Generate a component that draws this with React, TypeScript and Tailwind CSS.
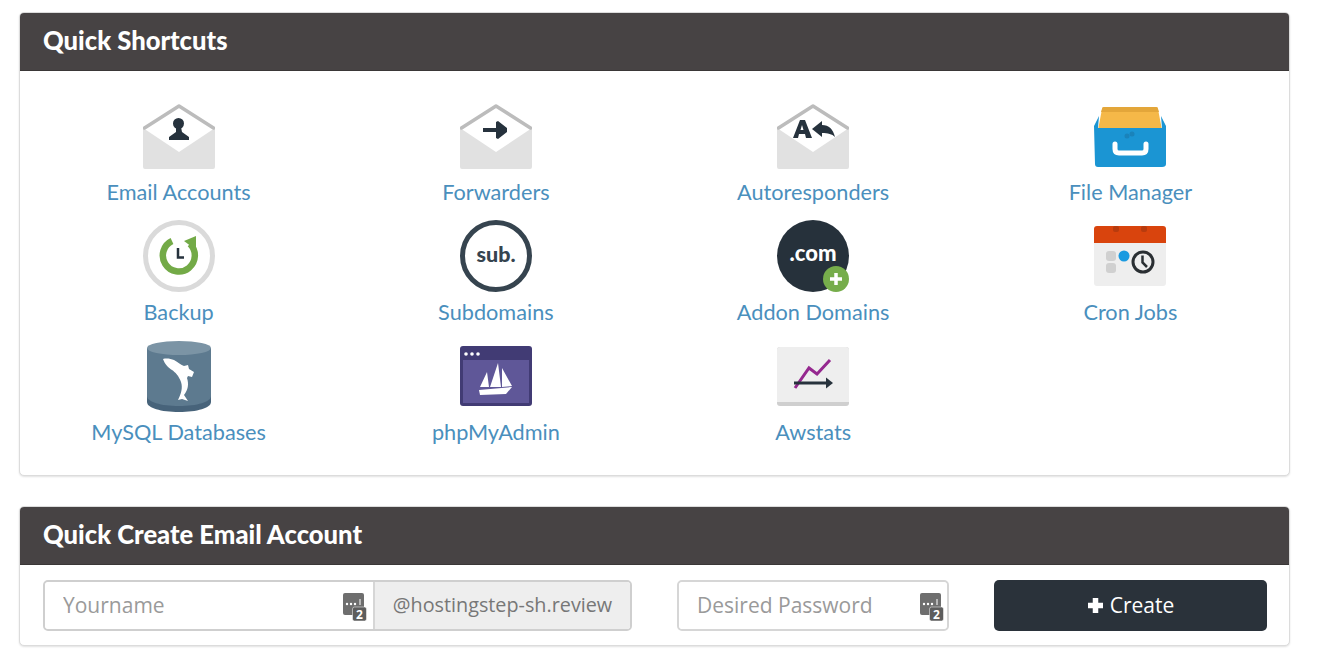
const LABEL_FONT = "font-['Lato',sans-serif]";

function Envelope({ children }: { children: React.ReactNode }) {
  return (
    <svg width="72" height="72" viewBox="0 0 72 72">
      <path d="M36 6 L70 28 L36 52 L2 28 Z" fill="#fff" />
      <path d="M0 28 L36 52 L72 28 L72 67 Q72 69 70 69 L2 69 Q0 69 0 67 Z" fill="#e1e1e1" />
      <path d="M1.5 28 L36 6 L70.5 28" fill="none" stroke="#bcbcbc" strokeWidth="3.5" strokeLinejoin="round" strokeLinecap="round" />
      {children}
    </svg>
  );
}

const EmailIcon = () => (
  <Envelope>
    <circle cx="35.5" cy="23.5" r="5.5" fill="#26323d" />
    <path d="M33 27 h5 l1 5 l7 5 v3 h-20 v-3 l7 -5 Z" fill="#26323d" />
  </Envelope>
);

const ForwarderIcon = () => (
  <Envelope>
    <path d="M23 28 h13 v-6 l2 -1 l9 7 v4 l-9 7 l-2 -1 v-6 h-13 Z" fill="#26323d" />
  </Envelope>
);

const AutoresponderIcon = () => (
  <Envelope>
    <path d="M16 38 L23 20 h5 l7 18 h-6 l-1 -4 h-6 l-1 4 Z M23.5 30 h3 l-1.5 -5 Z" fill="#26323d" fillRule="evenodd" />
    <path d="M35 29 L45 21 v4 c7 0 11 4 13 12 c-3 -3 -7 -4 -13 -4 v4 Z" fill="#26323d" />
  </Envelope>
);

const FileManagerIcon = () => (
  <svg width="72" height="72" viewBox="0 0 72 72">
    <path d="M8 9 Q8 7 10 7 L62 7 Q64 7 64 9 L68 30 L4 30 Z" fill="#f5b848" />
    <path d="M8 9 Q8 7 10 7 L62 7 Q64 7 64 9 L65 12 L7 12 Z" fill="#e3a63a" />
    <path d="M0 26 L5 16 L4 28 L68 28 L67 16 L72 26 L72 64 Q72 67 68 67 L4 67 Q1 67 1 64 Z" fill="#1b95d3" />
    <path d="M21 44 V49 Q21 53 25 53 H48 Q52 53 52 49 V44" fill="none" stroke="#fff" strokeWidth="5" strokeLinecap="round" />
    <circle cx="33" cy="36" r="2.5" fill="#1a83ba" />
    <circle cx="38" cy="34" r="2.5" fill="#1a83ba" />
  </svg>
);

const BackupIcon = () => (
  <svg width="72" height="72" viewBox="0 0 72 72">
    <circle cx="36" cy="36" r="33.5" fill="none" stroke="#dadada" strokeWidth="5" />
    <path d="M47 24 A 16 16 0 1 1 29 21" fill="none" stroke="#73aa47" strokeWidth="6.5" />
    <path d="M41 21 L53 16 L53 30 Z" fill="#73aa47" />
    <path d="M35 28 V37.5 H41" fill="none" stroke="#26323d" strokeWidth="2.5" />
  </svg>
);

const SubdomainIcon = () => (
  <svg width="72" height="72" viewBox="0 0 72 72">
    <circle cx="36" cy="36" r="33.5" fill="#fff" stroke="#36444f" strokeWidth="5" />
    <text x="36" y="42" textAnchor="middle" fontFamily="Lato, sans-serif" fontWeight="900" fontSize="21.5" fill="#36444f">sub.</text>
  </svg>
);

const AddonIcon = () => (
  <svg width="72" height="72" viewBox="0 0 72 72">
    <circle cx="36" cy="36" r="36" fill="#26313b" />
    <text x="36" y="41" textAnchor="middle" fontFamily="Lato, sans-serif" fontWeight="900" fontSize="22" fill="#fff">.com</text>
    <circle cx="59" cy="59" r="13" fill="#76ad4b" />
    <path d="M59 53 V65 M53 59 H65" stroke="#fff" strokeWidth="3.5" />
  </svg>
);

const CronIcon = () => (
  <svg width="72" height="72" viewBox="0 0 72 72">
    <path d="M0 23 H72 V63 Q72 66 69 66 H3 Q0 66 0 63 Z" fill="#eeeeee" />
    <path d="M0 23 V9 Q0 6 3 6 H69 Q72 6 72 9 V23 Z" fill="#d9440d" />
    <rect x="19" y="6" width="6" height="6" rx="2" fill="#b83b0e" />
    <rect x="47" y="6" width="6" height="6" rx="2" fill="#b83b0e" />
    <rect x="12" y="31" width="10" height="10" rx="3" fill="#d0d0d0" />
    <rect x="12" y="43" width="10" height="10" rx="3" fill="#d0d0d0" />
    <circle cx="30" cy="36" r="5.5" fill="#1a9ae0" />
    <circle cx="49" cy="42" r="10" fill="#eee" stroke="#2a2f33" strokeWidth="3" />
    <path d="M48.5 35.5 V42.5 L53 47" fill="none" stroke="#2a2f33" strokeWidth="2.5" />
  </svg>
);

const MysqlIcon = () => (
  <svg width="72" height="72" viewBox="0 0 72 72">
    <path d="M4 8 V62 C4 68 18 72 36 72 C54 72 68 68 68 62 V8 Z" fill="#47637a" />
    <path d="M4 8 V56 C4 62 18 66 36 66 C54 66 68 62 68 56 V8 Z" fill="#5d7a8f" />
    <ellipse cx="36" cy="8" rx="32" ry="7" fill="#7b94a5" />
    <path d="M20 19 C24 18 28 19 31 20 C35 22 38 25 41 26 L45 25 L46 29 L51 32 L49 37 L45 36 L44 38 C46 44 45 50 41 55 L45 61 L39 59 L35 60 C38 54 40 48 38 42 C36 36 32 32 29 30 C26 28 22 25 20 19 Z" fill="#fff" />
  </svg>
);

const PhpMyAdminIcon = () => (
  <svg width="72" height="72" viewBox="0 0 72 72">
    <rect x="0" y="6" width="72" height="60" rx="3" fill="#413b74" />
    <rect x="3" y="20" width="66" height="43" fill="#5f5798" />
    <circle cx="6" cy="14" r="1.8" fill="#fff" />
    <circle cx="12" cy="14" r="1.8" fill="#fff" />
    <circle cx="18" cy="14" r="1.8" fill="#fff" />
    <path d="M20 47 L27 32 L29 47 Z M30 47 L38 23 L41 47 Z M42 47 L42 28 L52 46 Z" fill="#fff" />
    <path d="M19 50 L52 47 L46 54 L20 55 Z" fill="#fff" />
  </svg>
);

const AwstatsIcon = () => (
  <svg width="72" height="72" viewBox="0 0 72 72">
    <path d="M0 10 Q0 7 3 7 H69 Q72 7 72 10 V63 Q72 66 69 66 H3 Q0 66 0 63 Z" fill="#cfcfcf" />
    <path d="M0 10 Q0 7 3 7 H69 Q72 7 72 10 V62 H0 Z" fill="#eeeeee" />
    <path d="M18 48 L32 28 L40 34 L53 20" fill="none" stroke="#95288f" strokeWidth="3" />
    <path d="M17 43 H50" stroke="#27323c" strokeWidth="3" />
    <path d="M49 37.5 L56 43 L49 48.5 Z" fill="#27323c" />
  </svg>
);

const SHORTCUTS = [
  { label: "Email Accounts", icon: EmailIcon },
  { label: "Forwarders", icon: ForwarderIcon },
  { label: "Autoresponders", icon: AutoresponderIcon },
  { label: "File Manager", icon: FileManagerIcon },
  { label: "Backup", icon: BackupIcon },
  { label: "Subdomains", icon: SubdomainIcon },
  { label: "Addon Domains", icon: AddonIcon },
  { label: "Cron Jobs", icon: CronIcon },
  { label: "MySQL Databases", icon: MysqlIcon },
  { label: "phpMyAdmin", icon: PhpMyAdminIcon },
  { label: "Awstats", icon: AwstatsIcon },
];

function Panel({ title, children }: { title: string; children: React.ReactNode }) {
  return (
    <section className="rounded-[5px] border border-[#dcdcdc] bg-white shadow-[0_1px_2px_rgba(0,0,0,0.12)]">
      <h2 className="flex h-[58px] items-center rounded-t-[4px] border-b border-[#3a3737] bg-[#474344] px-[23px] pb-[3px] font-['Lato',sans-serif] text-[25.6px] font-black text-white">
        {title}
      </h2>
      {children}
    </section>
  );
}

function KeyBadge({ className }: { className: string }) {
  return (
    <svg className={className} width="24" height="30" viewBox="0 0 24 30">
      <path d="M0 2 Q0 0 2 0 H19 Q21 0 21 2 V22 H2 Q0 22 0 20 Z" fill="#6e6e6e" />
      <circle cx="4" cy="11" r="1.2" fill="#fff" />
      <circle cx="8" cy="11" r="1.2" fill="#fff" />
      <circle cx="12" cy="11" r="1.2" fill="#fff" />
      <path d="M17 6 V12" stroke="#fff" strokeWidth="1" />
      <rect x="9.5" y="14" width="14" height="14" rx="2" fill="#5d5d5d" stroke="#fff" strokeWidth="0.5" />
      <text x="16.5" y="26" textAnchor="middle" fontFamily="Open Sans, sans-serif" fontWeight="700" fontSize="12" fill="#fff">2</text>
    </svg>
  );
}

export default function App() {
  return (
    <div className="flex min-h-[663px] flex-col gap-[30px] bg-white pt-[12px] pr-[30px] pl-[19px]">
      <Panel title="Quick Shortcuts">
        <div className={`grid grid-cols-4 gap-y-[13px] pt-[29px] pb-[28px] ${LABEL_FONT}`}>
          {SHORTCUTS.map((s) => {
            const Icon = s.icon;
            return (
              <a key={s.label} href="#" className="flex flex-col items-center">
                <Icon />
                <span className="mt-[5px] text-[21.7px] leading-[30px] text-[#4a8fbd]">{s.label}</span>
              </a>
            );
          })}
        </div>
      </Panel>

      <Panel title="Quick Create Email Account">
        <div className="flex gap-[45px] pt-[15px] pr-[22px] pb-[14px] pl-[23px] font-['Open_Sans',sans-serif] text-[21px]">
          <div className="flex h-[51px] w-[589px] rounded-[5px] border-2 border-[#cfcfcf]">
            <div className="relative flex-1">
              <input
                placeholder="Yourname"
                className="h-full w-full rounded-l-[4px] bg-white px-[18px] pb-[2px] placeholder:text-[#9a9a9a]"
              />
              <KeyBadge className="absolute top-[11px] right-[6px]" />
            </div>
            <span className="flex w-[257px] items-center justify-center rounded-r-[3px] border-l-2 border-[#d6d6d6] bg-[#eeeeee] pb-[2px] text-[19.8px] text-[#777777]">
              @hostingstep-sh.review
            </span>
          </div>
          <div className="relative h-[51px] w-[272px] rounded-[5px] border-2 border-[#d6d6d6]">
            <input
              placeholder="Desired Password"
              className="h-full w-full rounded-[4px] bg-white px-[18px] pb-[2px] placeholder:text-[#9a9a9a]"
            />
            <KeyBadge className="absolute top-[11px] right-[3px]" />
          </div>
          <button className="flex h-[51px] w-[273px] items-center justify-center gap-[6px] rounded-[5px] bg-[#2a323a] text-white">
            <svg width="17" height="17" viewBox="0 0 17 17">
              <path d="M8.5 1 V16 M1 8.5 H16" stroke="#fff" strokeWidth="5.5" />
            </svg>
            Create
          </button>
        </div>
      </Panel>
    </div>
  );
}
